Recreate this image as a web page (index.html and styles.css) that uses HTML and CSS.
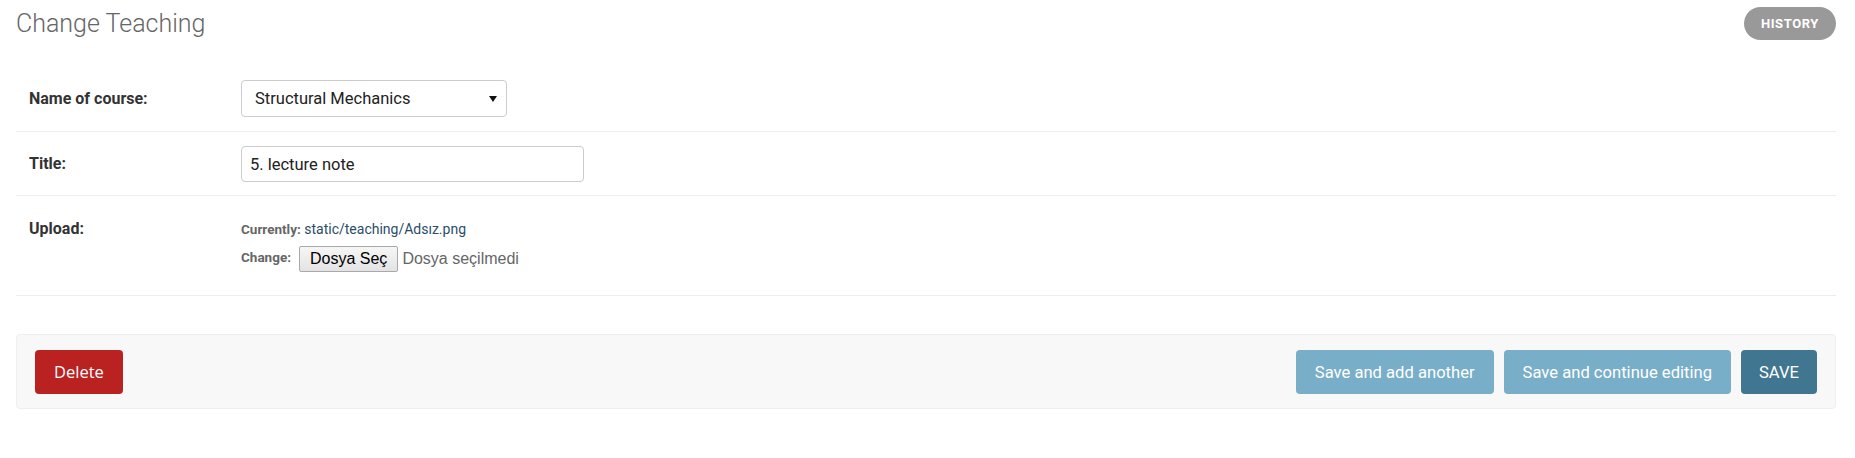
FILE: index.html
```html
<!DOCTYPE html>
<html lang="en">
<head>
<meta charset="utf-8">
<title>Change Teaching</title>
<link rel="stylesheet" href="styles.css">
</head>
<body>
<div class="page">
  <div class="header">
    <h1 class="title">Change Teaching</h1>
    <a class="history" href="#">History</a>
  </div>

  <div class="module">
    <div class="form-row row-course">
      <label class="field-label">Name of course:</label>
      <div class="select-wrap">
        <select class="select"><option>Structural Mechanics</option></select>
      </div>
    </div>

    <div class="form-row row-title">
      <label class="field-label">Title:</label>
      <input class="text-input" type="text" value="5. lecture note">
    </div>

    <div class="form-row row-upload">
      <label class="field-label upload-label">Upload:</label>
      <div class="upload">
        <p class="upload-line"><span class="small-label">Currently:</span>&nbsp;<a class="file-link" href="#">static/teaching/Adsız.png</a></p>
        <div class="upload-change">
          <span class="small-label change-label">Change:</span>
          <span class="file-btn">Dosya Seç</span>
          <span class="file-none">Dosya seçilmedi</span>
        </div>
      </div>
    </div>
  </div>

  <div class="submit-row">
    <a class="deletelink" href="#">Delete</a>
    <div class="save-group">
      <button class="btn btn-light">Save and add another</button>
      <button class="btn btn-light">Save and continue editing</button>
      <button class="btn btn-default">SAVE</button>
    </div>
  </div>
</div>
</body>
</html>
```

FILE: styles.css
```css
* { box-sizing: border-box; }

body {
  margin: 0;
  background: #fff;
  font-family: Roboto, "Liberation Sans", sans-serif;
  color: #333;
}

.page {
  padding: 0 19px 0 16px;
}

.header {
  display: flex;
  justify-content: space-between;
  align-items: flex-start;
  height: 40px;
}

.title {
  margin: 11px 0 0 0;
  font-size: 25px;
  line-height: 25px;
  font-weight: 300;
  color: #666;
}

.history {
  margin-top: 7px;
  height: 33px;
  line-height: 33px;
  padding: 0 17px;
  border-radius: 17px;
  background: #999;
  color: #fff;
  font-size: 13px;
  font-weight: 700;
  letter-spacing: 0.6px;
  text-transform: uppercase;
  text-decoration: none;
}

.module {
  margin-top: 26px;
}

.form-row {
  display: flex;
  align-items: flex-start;
  padding: 14px 13px 13px 13px;
  border-bottom: 1px solid #eee;
}

.row-course { padding-bottom: 14px; }

.field-label {
  width: 212px;
  flex: none;
  font-size: 16px;
  font-weight: 700;
  color: #333;
}

.row-course .field-label { line-height: 37px; }
.row-title .field-label { line-height: 36px; }
.upload-label { line-height: 22px; margin-top: 8px; }

.select-wrap {
  position: relative;
  width: 266px;
}

.select-wrap::after {
  content: "";
  position: absolute;
  right: 10px;
  top: 16px;
  border-left: 4px solid transparent;
  border-right: 4px solid transparent;
  border-top: 6px solid #111;
  pointer-events: none;
}

.select {
  -webkit-appearance: none;
  appearance: none;
  width: 266px;
  height: 37px;
  padding: 0 30px 0 13px;
  border: 1px solid #ccc;
  border-radius: 4px;
  background: #fff;
  font-family: Roboto, "Liberation Sans", sans-serif;
  font-size: 16.5px;
  color: #222;
}

.text-input {
  width: 343px;
  height: 36px;
  padding: 0 8px;
  border: 1px solid #ccc;
  border-radius: 4px;
  background: #fff;
  font-family: Roboto, "Liberation Sans", sans-serif;
  font-size: 16.5px;
  color: #222;
}

.upload {
  margin-top: 8px;
  margin-bottom: 10px;
}

.upload-line {
  margin: 0;
  height: 22px;
  line-height: 22px;
  font-size: 14px;
  color: #666;
  white-space: nowrap;
}

.small-label {
  font-size: 13.5px;
  font-weight: 700;
  color: #666;
}

.file-link {
  color: #2a4d69;
  text-decoration: none;
  font-size: 14px;
}

.upload-change {
  display: flex;
  align-items: flex-start;
  margin-top: 6px;
}

.change-label {
  line-height: 22px;
  margin-right: 8px;
}

.file-btn {
  height: 26px;
  line-height: 24px;
  padding: 0 10px 0 10px;
  border: 1px solid #a9a9a9;
  border-radius: 2px;
  background: linear-gradient(#f6f6f6, #e3e3e3);
  font-family: "Liberation Sans", Arial, sans-serif;
  font-size: 16px;
  color: #000;
}

.file-none {
  margin-left: 4px;
  line-height: 26px;
  font-family: "Liberation Sans", Arial, sans-serif;
  font-size: 16px;
  color: #666;
}

.submit-row {
  display: flex;
  justify-content: space-between;
  align-items: center;
  margin-top: 38px;
  padding: 15px 18px 14px 18px;
  background: #f8f8f8;
  border: 1px solid #eee;
  border-radius: 4px;
}

.deletelink {
  display: block;
  height: 44px;
  line-height: 44px;
  padding: 0 19px;
  border-radius: 4px;
  background: #ba2121;
  color: #fff;
  font-family: "Open Sans", sans-serif;
  font-size: 16.5px;
  text-decoration: none;
}

.save-group {
  display: flex;
  gap: 10px;
}

.btn {
  height: 44px;
  padding: 0 19px;
  border: none;
  border-radius: 4px;
  font-family: Roboto, "Liberation Sans", sans-serif;
  font-size: 16.6px;
  color: #fff;
}

.btn-light { background: #79aec8; }
.btn-default { background: #417690; padding: 0 18px; }
```
